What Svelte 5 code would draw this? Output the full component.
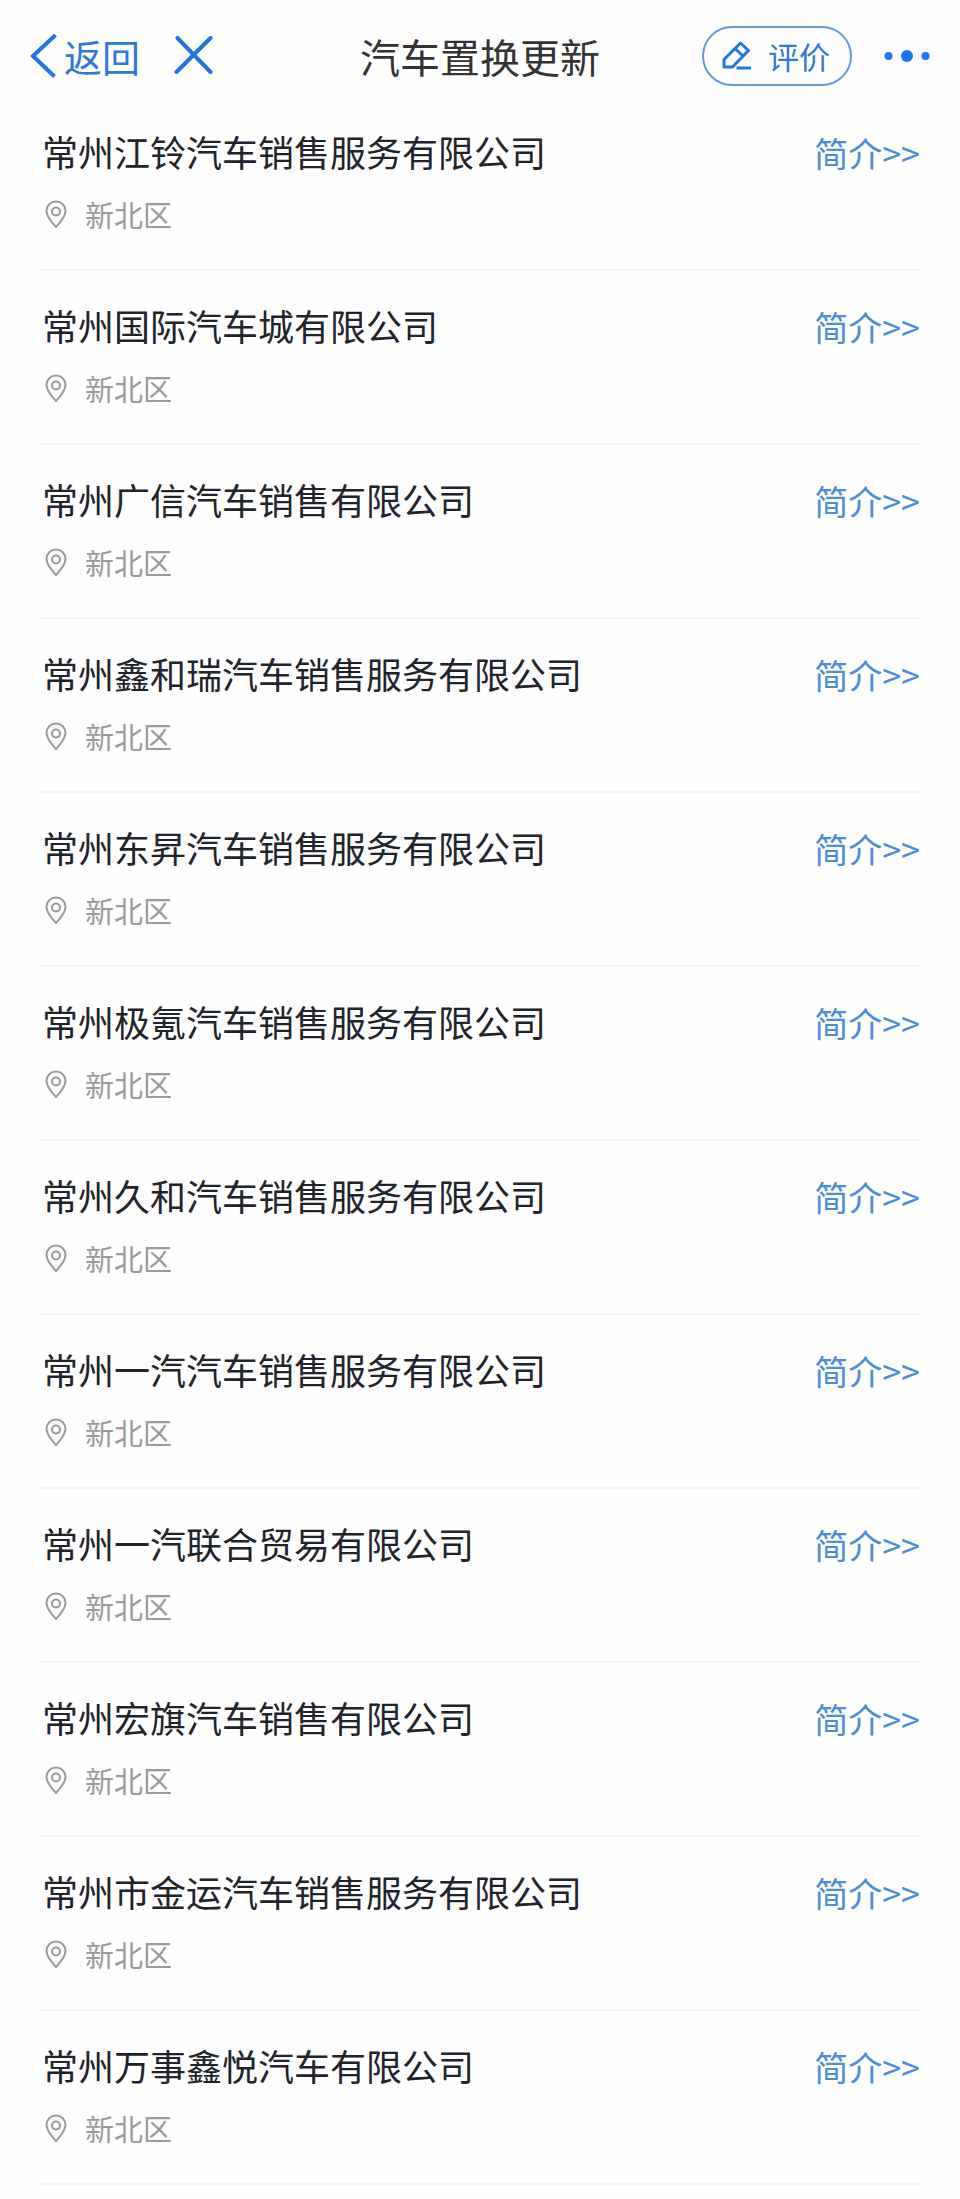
<script>
	const district = '新北区';

	const dealers = [
		'常州江铃汽车销售服务有限公司',
		'常州国际汽车城有限公司',
		'常州广信汽车销售有限公司',
		'常州鑫和瑞汽车销售服务有限公司',
		'常州东昇汽车销售服务有限公司',
		'常州极氪汽车销售服务有限公司',
		'常州久和汽车销售服务有限公司',
		'常州一汽汽车销售服务有限公司',
		'常州一汽联合贸易有限公司',
		'常州宏旗汽车销售有限公司',
		'常州市金运汽车销售服务有限公司',
		'常州万事鑫悦汽车有限公司',
	];
</script>

<header>
	<nav>
		<button class="back">
			<svg width="28" height="44" viewBox="0 0 28 44" aria-hidden="true">
				<path d="M25.5 1L3 22l21.500 20.500" />
			</svg>
			返回
		</button>
		<button class="close" aria-label="关闭">
			<svg width="40" height="40" viewBox="0 0 40 40" aria-hidden="true">
				<path d="M3.500 2L36.500 36M36.500 2L2.500 36" />
			</svg>
		</button>
	</nav>

	<h1>汽车置换更新</h1>

	<div class="actions">
		<button class="review">
			<svg width="30" height="30" viewBox="0 0 30 30" aria-hidden="true">
				<path d="M2 18.500L18.500 2l8 7.500L10.500 26H2zM13.500 8l7.500 7M14.500 27H29" />
			</svg>
			评价
		</button>
		<button class="more" aria-label="更多">
			<svg width="46" height="14" viewBox="0 0 46 14" aria-hidden="true">
				<circle cx="4.500" cy="7" r="4" />
				<circle cx="23" cy="7" r="6" />
				<circle cx="41.500" cy="7" r="4" />
			</svg>
		</button>
	</div>
</header>

<main>
	<ul>
		{#each dealers as name}
			<li>
				<div class="top">
					<h2>{name}</h2>
					<a href="#intro">简介&gt;&gt;</a>
				</div>
				<p>
					<svg width="22" height="28" viewBox="0 0 22 28" aria-hidden="true">
						<path d="M11 27C8 23.500 1.500 17 1.500 11a9.500 9.500 0 0 1 19 0C20.500 17 14 23.500 11 27z" />
						<circle cx="11" cy="11.500" r="4" />
					</svg>
					{district}
				</p>
			</li>
		{/each}
	</ul>
</main>

<style>
	:global(body) {
		margin: 0;
		background: #fefefe;
		font-family: "Noto Sans CJK SC", sans-serif;
	}

	header {
		display: grid;
		grid-template-columns: 1fr auto 1fr;
		align-items: center;
		padding: 26px 30px 11px;
	}

	nav,
	.actions,
	button {
		display: flex;
		align-items: center;
	}

	nav {
		gap: 34px;
	}

	.actions {
		justify-content: flex-end;
		gap: 32px;
	}

	button {
		padding: 0;
		border: 0;
		background: none;
		color: #2f78d6;
		font-family: inherit;
		cursor: pointer;
	}

	svg {
		flex: none;
		fill: none;
		stroke: currentColor;
	}

	.back {
		gap: 6px;
		font-size: 38px;
		line-height: 56px;
	}

	.back svg,
	.close svg {
		stroke: #2274e0;
		stroke-width: 4;
	}

	.close svg {
		stroke-linecap: round;
	}

	h1,
	h2,
	p,
	ul {
		margin: 0;
		padding: 0;
		font-weight: 400;
	}

	h1 {
		color: #333;
		font-size: 40px;
		line-height: 56px;
	}

	.review {
		gap: 16px;
		height: 60px;
		padding: 0 20px 0 18px;
		border: 2px solid #6698da;
		border-radius: 30px;
		font-size: 31px;
		line-height: 50px;
	}

	.review svg {
		stroke: #2274e0;
		stroke-width: 3;
		stroke-linejoin: round;
	}

	.more svg {
		fill: #1f75ef;
		stroke: none;
	}

	main {
		padding: 0 40px;
	}

	ul {
		list-style: none;
	}

	li {
		padding: 31px 0 37px;
		border-bottom: 2px solid #f6f6f7;
	}

	.top {
		display: flex;
		justify-content: space-between;
		align-items: flex-start;
		padding-left: 2px;
	}

	h2 {
		color: #202329;
		font-size: 36px;
		line-height: 46px;
	}

	a {
		color: #4a8cd6;
		font-size: 34px;
		line-height: 50px;
		text-decoration: none;
		white-space: nowrap;
	}

	p {
		display: flex;
		align-items: center;
		gap: 18px;
		margin-top: 18px;
		padding-left: 5px;
		color: #999;
		font-size: 29px;
		line-height: 36px;
	}

	p svg {
		stroke-width: 2;
	}
</style>
